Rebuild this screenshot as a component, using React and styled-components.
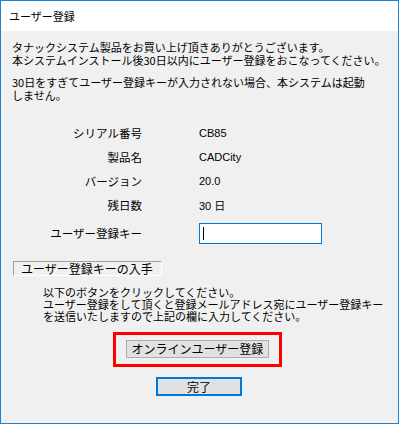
import React from "react"
import styled, { createGlobalStyle } from "styled-components"

const GlobalStyle = createGlobalStyle`
  html, body {
    margin: 0;
    padding: 0;
    background: #f0f0f0;
  }
  body {
    font-family: "Noto Sans CJK JP", "Liberation Sans", sans-serif;
    font-size: 11px;
    color: #000;
  }
`

const info = [
  { label: "シリアル番号", value: "CB85" },
  { label: "製品名", value: "CADCity" },
  { label: "バージョン", value: "20.0" },
  { label: "残日数", value: "30 日" },
]

function App() {
  return (
    <>
      <GlobalStyle />
      <Window>
        <TitleBar>ユーザー登録</TitleBar>
        <Body>
          <Para>
            タナックシステム製品をお買い上げ頂きありがとうございます。
            <br />
            本システムインストール後30日以内にユーザー登録をおこなってください。
          </Para>
          <Para>
            30日をすぎてユーザー登録キーが入力されない場合、本システムは起動
            <br />
            しません。
          </Para>
          <InfoGrid>
            {info.map(row => (
              <React.Fragment key={row.label}>
                <Label>{row.label}</Label>
                <Value>{row.value}</Value>
              </React.Fragment>
            ))}
            <Label $input>ユーザー登録キー</Label>
            <KeyField>
              <Caret />
            </KeyField>
          </InfoGrid>
          <GroupLabel>ユーザー登録キーの入手</GroupLabel>
          <Instructions>
            以下のボタンをクリックしてください。
            <br />
            ユーザー登録をして頂くと登録メールアドレス宛にユーザー登録キー
            <br />
            を送信いたしますので上記の欄に入力してください。
          </Instructions>
          <Highlight>
            <Button>オンラインユーザー登録</Button>
          </Highlight>
          <Actions>
            <Button $primary $width="86px">完了</Button>
          </Actions>
        </Body>
      </Window>
    </>
  )
}

export default App

const Window = styled.div`
  box-sizing: border-box;
  width: 399px;
  height: 424px;
  border: 1px solid #1883d7;
  display: flex;
  flex-direction: column;
  background: #f0f0f0;
  overflow: hidden;
`

const TitleBar = styled.div`
  height: 30px;
  flex: none;
  background: #fff;
  display: flex;
  align-items: center;
  padding-left: 8px;
  font-size: 11px;
`

const Body = styled.div`
  flex: 1;
  padding: 10px 0 0 11px;
  display: flex;
  flex-direction: column;
`

const Para = styled.p`
  margin: 0 0 10px;
  line-height: 12.5px;
  white-space: nowrap;
`

const InfoGrid = styled.div`
  display: grid;
  grid-template-columns: 130px 1fr;
  grid-auto-rows: 24px;
  column-gap: 57px;
  align-items: center;
  margin-top: 10px;
`

const Label = styled.div`
  text-align: right;
  font-size: 11.5px;
  ${p => p.$input && "margin-top: 8px; height: 21px; line-height: 21px;"}
`

const Value = styled.div`
  font-family: "Liberation Sans", "Noto Sans CJK JP", sans-serif;
  font-size: 11px;
`

const KeyField = styled.div`
  box-sizing: border-box;
  margin-top: 8px;
  width: 123px;
  height: 21px;
  border: 1px solid #0078d7;
  background: #fff;
  display: flex;
  align-items: center;
  padding-left: 3px;
`

const Caret = styled.span`
  width: 1px;
  height: 13px;
  background: #000;
`

const GroupLabel = styled.div`
  box-sizing: border-box;
  margin: 20px 0 0 1px;
  width: 149px;
  height: 15px;
  line-height: 13px;
  padding-left: 7px;
  border-top: 1px solid #a0a0a0;
  border-left: 1px solid #a0a0a0;
  border-right: 1px solid #fff;
  border-bottom: 1px solid #fff;
  font-size: 12px;
`

const Instructions = styled.p`
  margin: 10px 0 0 31px;
  line-height: 12px;
  white-space: nowrap;
`

const Highlight = styled.div`
  align-self: flex-start;
  margin: 10px 0 0 101px;
  border: 3px solid #ff0000;
  padding: 5px 10px 6px;
`

const Actions = styled.div`
  display: flex;
  margin: 10px 0 0 144px;
`

const Button = styled.button`
  box-sizing: border-box;
  width: ${p => p.$width || "143px"};
  height: ${p => (p.$primary ? "19px" : "18px")};
  border: ${p => (p.$primary ? "2px solid #0078d7" : "1px solid #adadad")};
  background: #e1e1e1;
  padding: 0;
  font-family: "Noto Sans CJK JP", "Liberation Sans", sans-serif;
  font-size: 12px;
  line-height: 1;
  color: #000;
`
